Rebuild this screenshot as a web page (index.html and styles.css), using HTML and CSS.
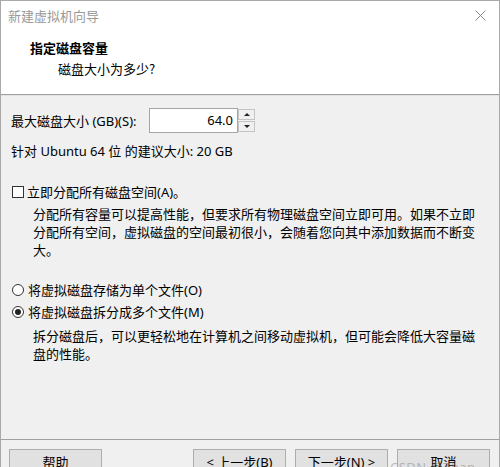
FILE: index.html
```html
<!DOCTYPE html>
<html lang="zh-CN">
<head>
<meta charset="utf-8">
<title>新建虚拟机向导</title>
<link rel="stylesheet" href="styles.css">
</head>
<body>
<div class="window">
  <div class="titlebar">
    <span class="title">新建虚拟机向导</span>
    <svg class="close" width="11" height="11" viewBox="0 0 11 11"><path d="M0.5 0.5 L10.5 10.5 M10.5 0.5 L0.5 10.5" stroke="#8a8a8a" stroke-width="1" fill="none"/></svg>
  </div>
  <div class="header">
    <div class="h-title">指定磁盘容量</div>
    <div class="h-sub">磁盘大小为多少?</div>
  </div>
  <div class="content">
    <div class="row size-row">
      <label class="label">最大磁盘大小 (GB)(S):</label>
      <div class="spin">
        <div class="spin-input">64.0</div>
        <div class="spin-btns">
          <div class="spin-btn"><span class="arrow-up"></span></div>
          <div class="spin-btn"><span class="arrow-down"></span></div>
        </div>
      </div>
    </div>
    <div class="line recommend">针对 Ubuntu 64 位 的建议大小: 20 GB</div>
    <div class="line check-row"><span class="checkbox"></span><span>立即分配所有磁盘空间(A)。</span></div>
    <p class="desc desc1">分配所有容量可以提高性能，但要求所有物理磁盘空间立即可用。如果不立即分配所有空间，虚拟磁盘的空间最初很小，会随着您向其中添加数据而不断变大。</p>
    <div class="line radio-row r1"><span class="radio"></span><span>将虚拟磁盘存储为单个文件(O)</span></div>
    <div class="line radio-row r2"><span class="radio checked"></span><span>将虚拟磁盘拆分成多个文件(M)</span></div>
    <p class="desc desc2">拆分磁盘后，可以更轻松地在计算机之间移动虚拟机，但可能会降低大容量磁盘的性能。</p>
  </div>
  <div class="footer">
    <button class="btn">帮助</button>
    <div class="spacer"></div>
    <button class="btn">&lt; 上一步(B)</button>
    <button class="btn">下一步(N) &gt;</button>
    <button class="btn">取消</button>
  </div>
  <span class="watermark">CSDN @Zhan</span>
</div>
</body>
</html>
```

FILE: styles.css
```css
* { box-sizing: border-box; }
html, body { margin: 0; padding: 0; background: #ffffff; }
body {
  font-family: "Noto Sans", "Noto Sans CJK SC", sans-serif;
  font-size: 13px;
  color: #000;
}
.window {
  position: relative;
  width: 500px;
  height: 467px;
  border: 1px solid #a9a9a9;
  border-bottom: none;
  display: flex;
  flex-direction: column;
  overflow: hidden;
  background: #fff;
}
.titlebar {
  height: 29px;
  display: flex;
  align-items: center;
  justify-content: space-between;
  padding: 0 13px 0 7px;
  color: #999;
  font-family: "Noto Sans CJK SC", sans-serif;
  font-size: 13px;
}
.close { display: block; margin-top: -1px; }
.header {
  height: 65px;
  border-bottom: 1px solid #a0a0a0;
  padding-top: 9px;
  font-family: "Noto Sans CJK SC", sans-serif;
}
.h-title {
  font-weight: bold;
  padding-left: 29px;
  line-height: 18px;
}
.h-sub {
  padding-left: 57px;
  line-height: 18px;
  margin-top: 3px;
}
.content {
  flex: 1;
  background: #f0f0f0;
  border-top: 1px solid #e3e3e3;
  padding: 0 10px;
  display: flex;
  flex-direction: column;
}
.row { display: flex; align-items: center; }
.size-row { margin-top: 12px; height: 25px; }
.label { width: 138px; }
.spin { display: flex; height: 25px; }
.spin-input {
  width: 89px;
  height: 25px;
  background: #fff;
  border: 1px solid #a5a5a5;
  text-align: right;
  padding-right: 4px;
  line-height: 22px;
}
.spin-btns {
  width: 17px;
  display: flex;
  flex-direction: column;
  gap: 1px;
  padding: 1px 0;
}
.spin-btn {
  flex: 1;
  background: #f0f0f0;
  border: 1px solid #c4c4c4;
  display: flex;
  align-items: center;
  justify-content: center;
}
.arrow-up, .arrow-down {
  width: 0; height: 0;
  border-left: 3px solid transparent;
  border-right: 3px solid transparent;
}
.arrow-up { border-bottom: 3px solid #222; }
.arrow-down { border-top: 3px solid #222; }
.line { line-height: 18px; display: flex; align-items: center; }
.recommend { margin-top: 9px; }
.check-row { margin-top: 23px; }
.checkbox {
  width: 12px; height: 12px;
  border: 1px solid #333;
  background: #fff;
  margin: 0 3px 0 1px;
}
.desc {
  margin: 4px 0 0 0;
  padding-left: 22px;
  width: 474px;
  line-height: 18px;
}
.radio-row.r1 { margin-top: 22px; }
.radio-row.r2 { margin-top: 4px; }
.radio {
  width: 12px; height: 12px;
  border: 1px solid #333;
  border-radius: 50%;
  background: #fff;
  margin: 0 4px 0 1px;
  display: flex;
  align-items: center;
  justify-content: center;
}
.radio.checked::after {
  content: "";
  width: 6px; height: 6px;
  border-radius: 50%;
  background: #222;
}
.desc2 { margin-top: 6px; }
.footer {
  height: 28px;
  flex: none;
  background: #f0f0f0;
  border-top: 1px solid #a0a0a0;
  display: flex;
  gap: 9px;
  padding: 9px 9px 0 8px;
}
.spacer { flex: 1; }
.btn {
  width: 93px;
  height: 26px;
  flex: none;
  background: #e1e1e1;
  border: 1px solid #adadad;
  font-family: "Noto Sans", "Noto Sans CJK SC", sans-serif;
  font-size: 13px;
  color: #000;
  padding: 0;
  line-height: 24px;
}
.watermark {
  position: absolute;
  left: 389px;
  top: 457px;
  font-size: 13px;
  color: rgba(120,120,120,0.45);
  letter-spacing: 0.5px;
}
```
